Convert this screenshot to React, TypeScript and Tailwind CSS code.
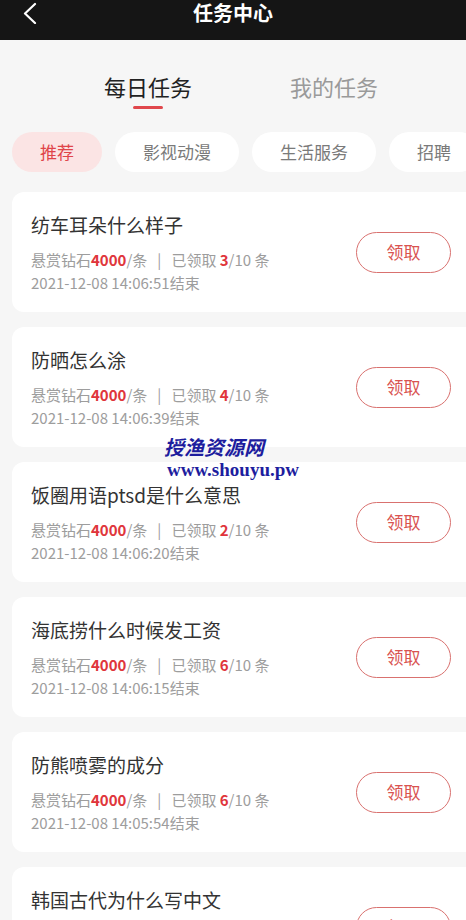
import React from 'react';

const tasks = [
  { title: '纺车耳朵什么样子', got: 3, end: '2021-12-08 14:06:51' },
  { title: '防晒怎么涂', got: 4, end: '2021-12-08 14:06:39' },
  { title: '饭圈用语ptsd是什么意思', got: 2, end: '2021-12-08 14:06:20' },
  { title: '海底捞什么时候发工资', got: 6, end: '2021-12-08 14:06:15' },
  { title: '防熊喷雾的成分', got: 6, end: '2021-12-08 14:05:54' },
  { title: '韩国古代为什么写中文', got: 5, end: '2021-12-08 14:05:40' }
];

const chips = ['推荐', '影视动漫', '生活服务', '招聘'];

const App: React.FC = () => {
  return (
    <div
      className="relative w-[466px] h-[920px] overflow-hidden bg-[#f6f6f6]"
      style={{ fontFamily: '"Noto Sans CJK SC", "Noto Sans", sans-serif' }}
    >
      {/* Header */}
      <div className="relative h-[40px] bg-[#151515] flex justify-center">
        <svg className="absolute left-[20px] top-[2px]" width="20" height="22" viewBox="0 0 20 22">
          <path d="M15 2 L5 11.5 L15 21" fill="none" stroke="#fff" strokeWidth="2.2" strokeLinecap="round" strokeLinejoin="round" />
        </svg>
        <span className="text-white text-[20px] font-bold leading-[24px] pt-[1px]">任务中心</span>
      </div>

      {/* Tabs */}
      <div className="flex h-[74px] pt-[31px]">
        <div className="w-[296px] flex flex-col items-center">
          <span className="text-[22px] leading-[30px] text-[#222]">每日任务</span>
          <span className="mt-[5px] w-[30px] h-[3px] rounded-full bg-[#e0474c]" />
        </div>
        <div className="w-[76px] flex flex-col items-center">
          <span className="text-[22px] leading-[30px] text-[#9a9a9a] whitespace-nowrap">我的任务</span>
        </div>
      </div>

      {/* Chips */}
      <div className="flex gap-[13px] pl-3 mt-[18px] whitespace-nowrap">
        {chips.map((c, i) => (
          <div
            key={c}
            className={
              i === 0
                ? 'shrink-0 h-[40px] px-7 rounded-full bg-[#fbe4e4] text-[#e0454a] text-[17px] flex items-center'
                : 'shrink-0 h-[40px] px-7 rounded-full bg-white text-[#7a7a7a] text-[17px] flex items-center'
            }
          >
            {c}
          </div>
        ))}
      </div>

      {/* Task list */}
      <div className="flex flex-col gap-[15px] pl-3 mt-[20px]">
        {tasks.map((t) => (
          <div
            key={t.title}
            className="w-[466px] h-[120px] bg-white rounded-xl flex items-center shrink-0"
          >
            <div className="flex-1 pl-[19px] pt-[21px] pb-[18px] self-start">
              <div className="text-[19px] leading-[24px] text-[#333]">{t.title}</div>
              <div className="mt-[12px] text-[15px] leading-[22px] text-[#9d9d9d] whitespace-nowrap">
                悬赏钻石<span className="text-[#e0353b] font-bold">4000</span>/条
                <span className="mx-[10px]">|</span>
                已领取 <span className="text-[#e0353b] font-bold">{t.got}</span>/10 条
              </div>
              <div className="mt-[1px] text-[15px] leading-[22px] text-[#9d9d9d]">{t.end}结束</div>
            </div>
            <button className="mr-[27px] w-[95px] h-[41px] rounded-full border-[1.5px] border-[#d9716f] text-[#d9534f] text-[17px] flex items-center justify-center">
              领取
            </button>
          </div>
        ))}
      </div>

      {/* Watermark */}
      <div className="absolute left-0 top-[434px] w-[466px] flex flex-col items-center pointer-events-none">
        <span className="ml-[-38px] text-[20px] leading-[26px] font-bold italic text-[#1d1d9e]">
          授渔资源网
        </span>
        <span
          className="text-[19px] leading-[20px] font-bold text-[#1d1d9e]"
          style={{ fontFamily: '"Liberation Serif", serif' }}
        >
          www.shouyu.pw
        </span>
      </div>
    </div>
  );
};

export default App;
